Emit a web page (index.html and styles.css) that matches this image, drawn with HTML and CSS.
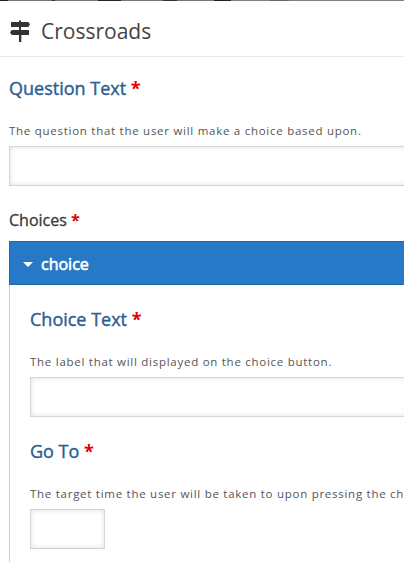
FILE: index.html
```html
<!DOCTYPE html>
<html lang="en">
<head>
<meta charset="utf-8">
<title>Crossroads</title>
<link rel="stylesheet" href="styles.css">
</head>
<body>
<div class="backdrop"></div>
<header class="header">
  <svg class="icon" viewBox="0 0 20 22" aria-hidden="true"><path d="M9 .5h2V2h7.300L20 4.200 18.300 7H1.500Q1 7 1 6.500V2.500Q1 2 1.500 2H9zM9 7h2V10h7.500q.5 0 .5.5v4q0 .5-.5.5H1.700L0 12.500 1.700 10H9zM9 15h2.300V22H9z"/></svg>
  <h1 class="title">Crossroads</h1>
</header>
<main class="form">
  <section class="field">
    <label class="label">Question Text <b class="req">*</b></label>
    <p class="hint">The question that the user will make a choice based upon.</p>
    <input class="input">
  </section>
  <h2 class="list-label">Choices <b class="req">*</b></h2>
  <section class="group">
    <div class="group-title"><i class="arrow"></i>choice</div>
    <div class="group-body">
      <div class="field">
        <label class="label">Choice Text <b class="req">*</b></label>
        <p class="hint">The label that will displayed on the choice button.</p>
        <input class="input">
      </div>
      <div class="field">
        <label class="label">Go To <b class="req">*</b></label>
        <p class="hint">The target time the user will be taken to upon pressing the ch</p>
        <input class="input input-short">
      </div>
    </div>
  </section>
</main>
</body>
</html>
```
FILE: styles.css
```css
* { box-sizing: border-box; }
body { margin: 0; height: 562px; overflow: hidden; background: #fff; font-family: "Open Sans", sans-serif; color: #333; }
.backdrop { height: 1px; background: linear-gradient(90deg, #222 8px, #777 8px 52px, #333 52px 55px, #777 55px 98px, #2a2527 98px 121px, #777 121px 163px, #333 163px 177px, #777 177px 214px, #221d1f 214px 231px, #808080 231px 270px, #666 270px 289px, #808080 289px); }
.header { height: 56px; display: flex; align-items: center; padding: 5px 0 0 10px; gap: 11px; border-bottom: 1px solid #e9e9e9; }
.icon { width: 20px; height: 22px; fill: #333; }
.title { margin: 0; font-size: 21px; font-weight: 400; line-height: 30px; color: #444; }
.form { width: 100%; padding: 19px 0 0 9px; overflow: hidden; }
.label { display: block; height: 24px; font-size: 18px; line-height: 24px; color: #2b5e92; -webkit-text-stroke: .4px; }
.req { color: #e00000; font-weight: 700; -webkit-text-stroke: 0; }
.hint { margin: 22px 0 6px; height: 18px; font-size: 11.500px; line-height: 18px; letter-spacing: .73px; color: #555; white-space: nowrap; }
.input { display: block; width: calc(100% + 4px); height: 40px; border: 1px solid #d5d5d5; box-shadow: inset 0 0 5px #ddd; background: #fff; }
.input-short { width: 75px; }
.list-label { margin: 23px 0 9px; height: 23px; font-size: 16px; line-height: 23px; font-weight: 400; color: #3c3c3c; -webkit-text-stroke: .35px; }
.group-title { height: 44px; display: flex; align-items: center; padding: 2px 0 0 13px; gap: 8px; background: #2579c6; border: 1px solid #2068aa; border-right: 0; color: #fff; font-size: 16px; -webkit-text-stroke: .6px; }
.arrow { border: 5px solid transparent; border-top-color: #fff; border-bottom: 0; }
.group-body { padding: 22px 0 0 20px; border-left: 1px solid #ccc; }
.group-body .field { height: 132px; }
```
